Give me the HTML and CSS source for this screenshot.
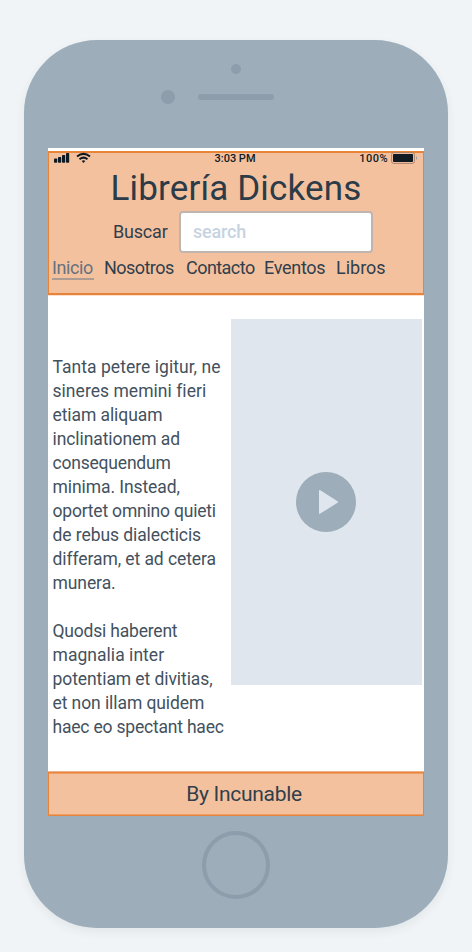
FILE: index.html
```html
<!DOCTYPE html>
<html lang="es">
<head>
<meta charset="utf-8">
<title>Librería Dickens</title>
<link rel="stylesheet" href="styles.css">
</head>
<body>
<div class="phone">
  <div class="phone-top">
    <span class="sensor"></span>
    <div class="speaker-row"><span class="camera"></span><span class="speaker"></span></div>
  </div>
  <div class="screen">
    <header class="header">
      <div class="status">
        <svg class="signal" width="39" height="12" viewBox="0 0 39 12">
          <g fill="#101a22"><rect x="1" y="6.4" width="3.200" height="4.400" rx=".8"/><rect x="5" y="5" width="3.200" height="5.800" rx=".8"/><rect x="9" y="3" width="3.200" height="7.800" rx=".8"/><rect x="13" y="1" width="3.200" height="9.800" rx=".8"/></g>
          <g fill="none" stroke="#101a22" stroke-width="2"><path d="M24 4.500Q30.500-.8 37 4.500"/><path d="M26.500 7.300Q30.500 4 34.500 7.300"/></g>
          <path d="M28.700 9Q30.500 7.700 32.300 9L30.500 10.900Z" fill="#101a22"/>
        </svg>
        <span class="time">3:03 PM</span>
        <span class="battery"><span class="percent">100%</span>
          <svg width="27" height="12" viewBox="0 0 27 12"><rect x=".6" y=".6" width="22.800" height="10.800" rx="2" fill="none" stroke="#a9826a"/><rect x="2" y="2" width="20" height="8" rx=".8" fill="#101a22"/><path d="M25 4Q27 6 25 8Z" fill="#8d9ba3"/></svg>
        </span>
      </div>
      <h1 class="title">Librería Dickens</h1>
      <div class="search"><label for="q">Buscar</label><input id="q" type="text" placeholder="search"></div>
      <nav class="nav"><a class="active">Inicio</a><a class="nosotros">Nosotros</a><a class="contacto">Contacto</a><a class="eventos">Eventos</a><a class="libros">Libros</a></nav>
    </header>
    <main class="main">
      <div class="copy">
        <p><span class="loose">Tanta petere igitur, ne</span><br><span class="loose">sineres memini fieri</span><br>etiam aliquam<br>inclinationem ad<br><span class="tight">consequendum</span><br>minima. Instead,<br><span class="tight">oportet omnino quieti</span><br>de rebus dialecticis<br>differam, et ad cetera<br>munera.</p>
        <p><span class="tight">Quodsi haberent</span><br><span class="loose">magnalia inter</span><br>potentiam et divitias,<br>et non illam quidem<br><span class="tight">haec eo spectant haec</span></p>
      </div>
      <div class="video">
        <svg width="60" height="60" viewBox="0 0 60 60"><circle cx="30" cy="30" r="30" fill="#9dadb9"/><path d="M23 19V41Q23 42.400 24.300 41.600L41.500 30.800Q42.600 30 41.500 29.200L24.300 18.300Q23 17.600 23 19Z" fill="#dfe6ee"/></svg>
      </div>
    </main>
    <footer class="footer">By Incunable</footer>
  </div>
  <div class="home"></div>
</div>
</body>
</html>
```
FILE: styles.css
```css
* { box-sizing: border-box; }
body { margin: 0; height: 952px; padding: 40px 24px 24px; background: #f0f4f7; font-family: Roboto, "Liberation Sans", sans-serif; color: #303f4b; overflow: hidden; }
.phone { width: 424px; height: 888px; border-radius: 73px; background: #9dadb9; box-shadow: 0 4px 10px rgba(40, 50, 60, .07); padding: 0 24px; }
.phone-top { height: 108px; padding-top: 24px; display: flex; flex-direction: column; align-items: center; gap: 16px; }
.sensor { width: 10px; height: 10px; border-radius: 50%; background: #8e9dac; }
.speaker-row { width: 150px; height: 14px; display: flex; align-items: center; gap: 23px; }
.camera { width: 14px; height: 14px; border-radius: 50%; background: #8e9dac; }
.speaker { width: 76px; height: 6px; border-radius: 3px; background: #8e9dac; }
.screen { width: 376px; height: 668px; background: #fff; padding-top: 3px; display: flex; flex-direction: column; }
.header { height: 144px; background: #f4c19f; border: 1px solid #e8833a; border-width: 2px 1px; box-shadow: 0 1px #fae0cd; flex: none; }
.status { height: 12px; display: grid; grid-template-columns: 1fr auto 1fr; padding: 0 5px 0 4px; font-size: 11px; line-height: 12px; font-weight: 500; color: #101a22; }
.status svg { margin-top: -1px; }
.time { letter-spacing: 0; padding-right: 1px; }
.battery { display: flex; justify-content: flex-end; gap: 3px; }
.percent { letter-spacing: .5px; }
.title { margin: 0; height: 46px; padding-top: 1px; line-height: 46px; text-align: center; font-size: 35px; font-weight: 400; letter-spacing: .15px; white-space: nowrap; color: #2b3b47; }
.search { display: flex; height: 42px; align-items: center; padding-left: 64px; font-size: 18px; letter-spacing: -.2px; }
.search label { width: 66px; padding-bottom: 1px; }
.search input { width: 194px; height: 42px; border: 2px solid #bfb5b0; border-radius: 4px; background: #fff; padding: 0 12px 2px; font: 500 18px Roboto, sans-serif; letter-spacing: -.2px; color: #303f4b; }
.search input::placeholder { color: #c7d3df; opacity: 1; }
.nav { display: flex; height: 28px; margin-top: 1px; padding-left: 3px; font-size: 18px; line-height: 28px; white-space: nowrap; }
.nav a { width: 78px; flex: none; padding-left: 1px; letter-spacing: -.55px; }
.nav .active { width: 42px; height: 26px; margin-right: 9px; padding-left: 0; color: #66727d; border-bottom: 2px solid #ad9a91; letter-spacing: -.4px; }
.nav .nosotros { width: 82px; }
.nav .eventos { width: 72px; letter-spacing: -.3px; }
.nav .libros { letter-spacing: 0; }
.main { height: 477px; margin-top: 0; padding: 24px 2px 0 4.5px; display: flex; flex: none; }
.copy { width: 178px; padding-top: 36px; font-size: 17.5px; line-height: 24px; white-space: nowrap; color: #43515e; letter-spacing: -.08px; }
.copy p { margin: 0 0 24px; }
.loose { letter-spacing: .04px; }
.tight { letter-spacing: -.2px; }
.video { width: 191.5px; height: 366px; background: #dfe6ee; display: flex; align-items: center; justify-content: center; }
.footer { height: 44px; background: #f4c19f; border: 1px solid #e8833a; box-shadow: 0 -1px #f0b48b, inset 0 1px #ee9f68, inset 0 -1px #ee9f68; text-align: center; line-height: 42px; font-size: 21px; letter-spacing: -.3px; padding-left: 16px; color: #303f4b; flex: none; }
.home { width: 68px; height: 68px; border: 4px solid #8e9dac; border-radius: 50%; margin: 15px auto 0; }
```
